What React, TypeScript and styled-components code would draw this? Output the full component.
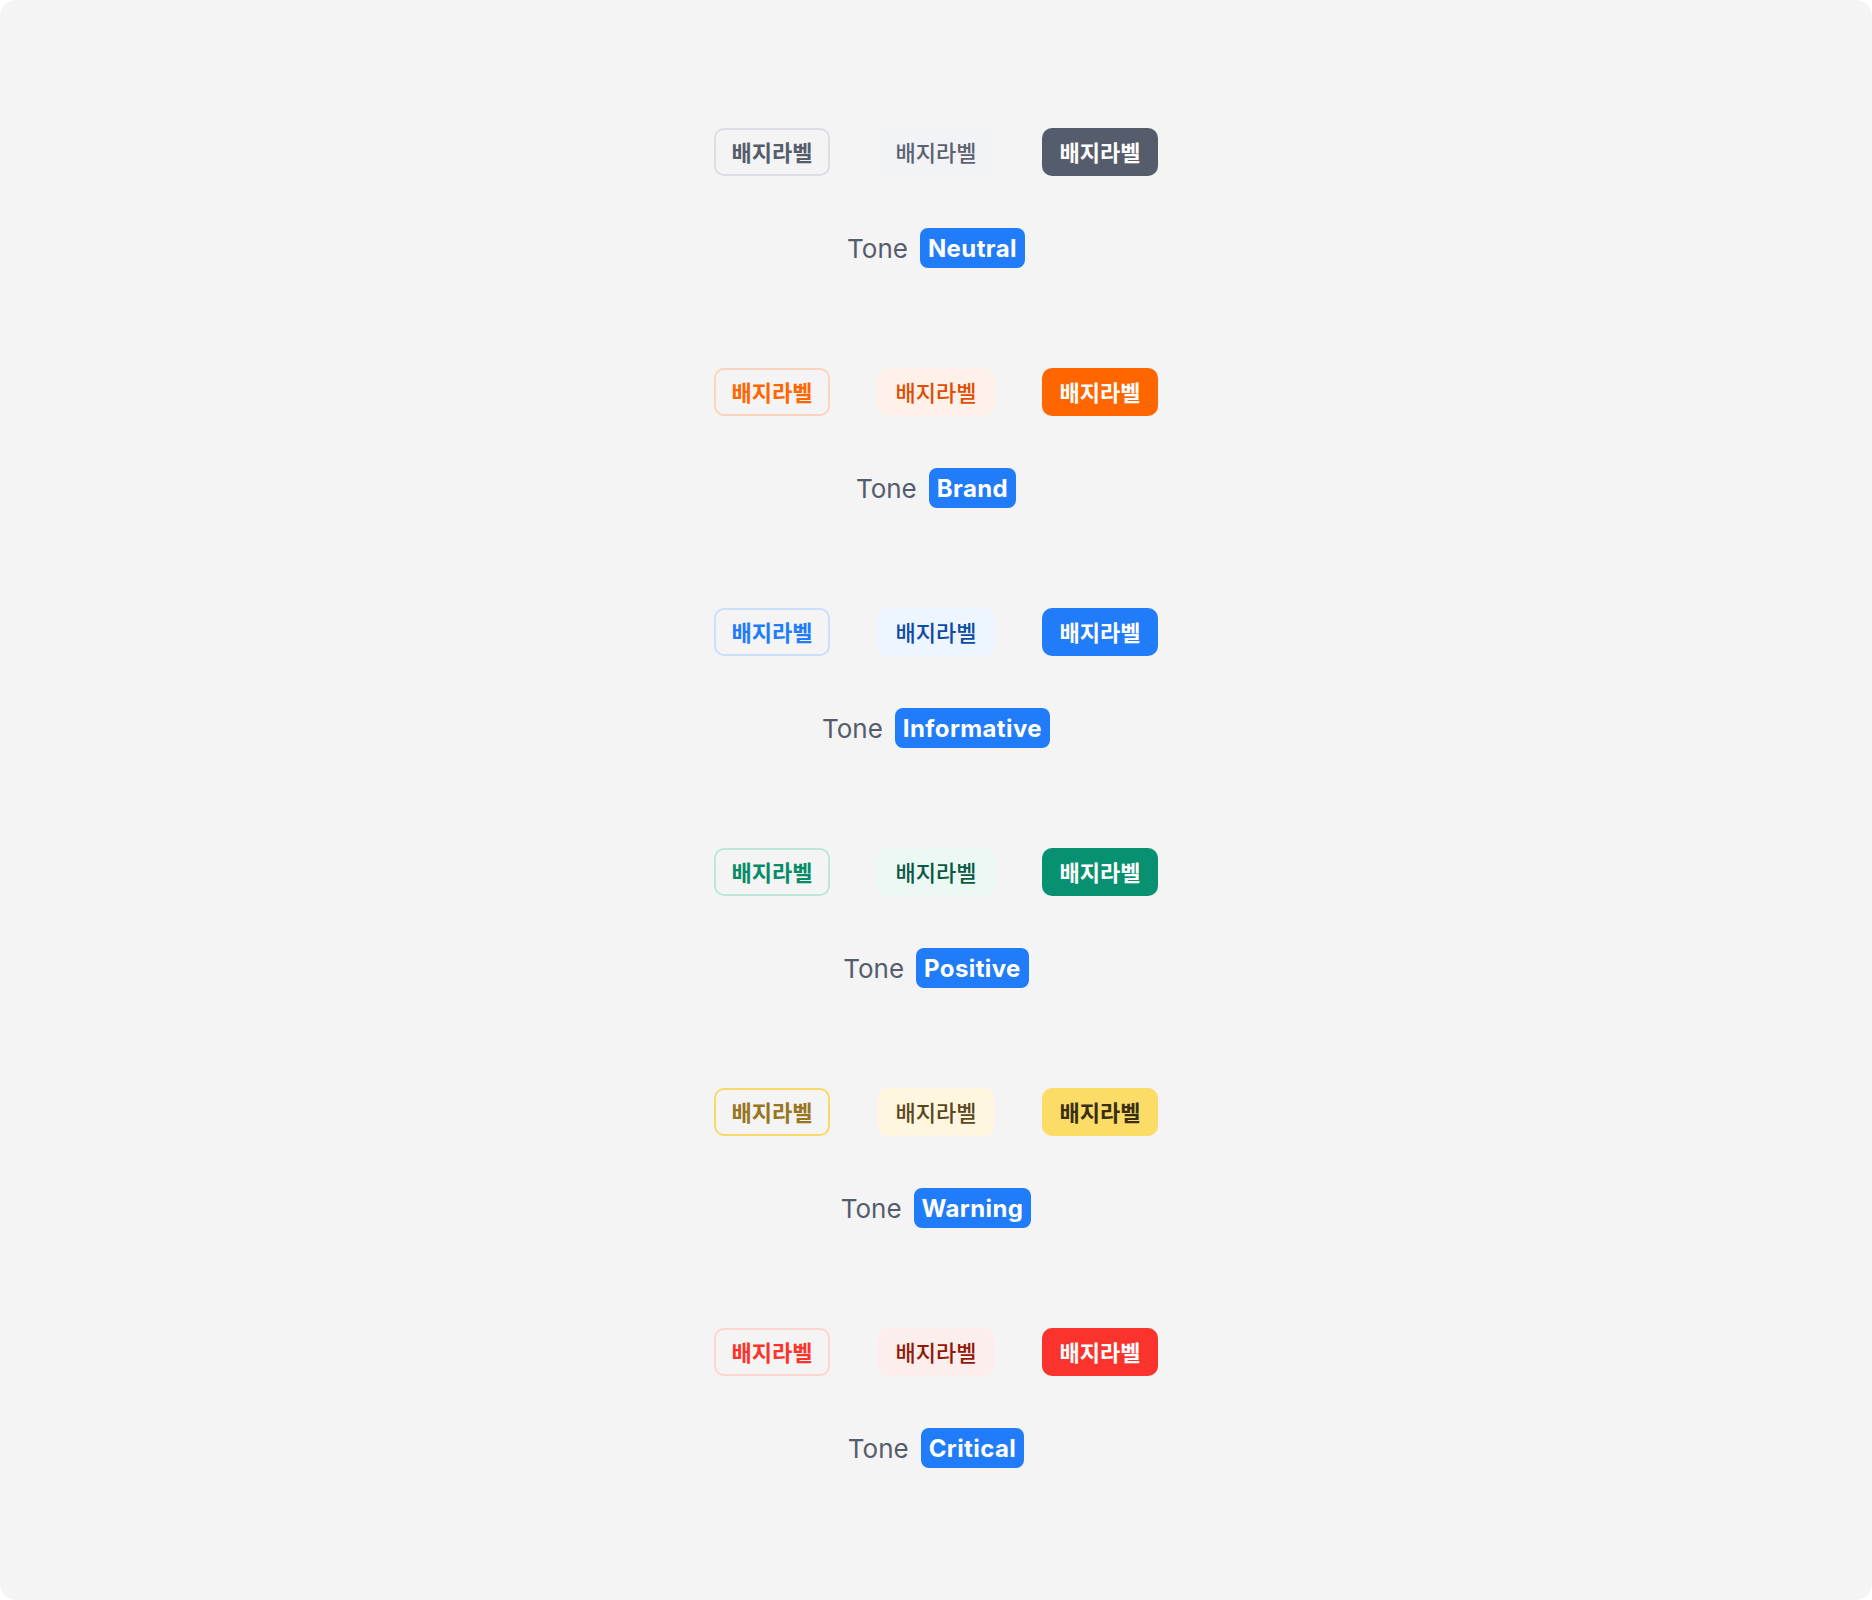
import React, { FC } from 'react';
import styled, { createGlobalStyle } from 'styled-components';

type Tone = 'neutral' | 'brand' | 'informative' | 'positive' | 'warning' | 'critical';
type Variant = 'outline' | 'weak' | 'solid';

interface Palette {
  border: string;
  outlineText: string;
  weakBg: string;
  weakText: string;
  solidBg: string;
  solidText: string;
}

const palettes: Record<Tone, Palette> = {
  neutral: {
    border: '#dcdee3',
    outlineText: '#555d6d',
    weakBg: '#f2f3f6',
    weakText: '#5b6271',
    solidBg: '#555d6d',
    solidText: '#ffffff',
  },
  brand: {
    border: '#ffd3bb',
    outlineText: '#ff6600',
    weakBg: '#fff1ea',
    weakText: '#e14d00',
    solidBg: '#ff6600',
    solidText: '#ffffff',
  },
  informative: {
    border: '#c9dffd',
    outlineText: '#217cf9',
    weakBg: '#edf5ff',
    weakText: '#0f4ba3',
    solidBg: '#217cf9',
    solidText: '#ffffff',
  },
  positive: {
    border: '#bde8d5',
    outlineText: '#078b69',
    weakBg: '#ebf8f3',
    weakText: '#0b5943',
    solidBg: '#079170',
    solidText: '#ffffff',
  },
  warning: {
    border: '#f9d769',
    outlineText: '#977522',
    weakBg: '#fff6df',
    weakText: '#5c4820',
    solidBg: '#fbdc66',
    solidText: '#3a2e12',
  },
  critical: {
    border: '#ffd5d2',
    outlineText: '#fa342c',
    weakBg: '#fdeeee',
    weakText: '#931807',
    solidBg: '#fa342c',
    solidText: '#ffffff',
  },
};

const tones: { tone: Tone; label: string }[] = [
  { tone: 'neutral', label: 'Neutral' },
  { tone: 'brand', label: 'Brand' },
  { tone: 'informative', label: 'Informative' },
  { tone: 'positive', label: 'Positive' },
  { tone: 'warning', label: 'Warning' },
  { tone: 'critical', label: 'Critical' },
];

const variants: Variant[] = ['outline', 'weak', 'solid'];

const GlobalStyle = createGlobalStyle`
  html, body {
    margin: 0;
    padding: 0;
    background: #ffffff;
    overflow: hidden;
  }
  body {
    font-family: Inter, "Noto Sans CJK KR", "Noto Sans", sans-serif;
    -webkit-font-smoothing: antialiased;
  }
`;

const Canvas = styled.main`
  box-sizing: border-box;
  width: 100%;
  height: 100vh;
  padding-top: 128px;
  background: #f4f4f4;
  border-radius: 16px;
  display: flex;
  flex-direction: column;
  align-items: center;
  gap: 100px;
`;

const ToneGroup = styled.section`
  display: flex;
  flex-direction: column;
  align-items: center;
  gap: 52px;
`;

const BadgeRow = styled.div`
  display: flex;
  gap: 48px;
`;

const Badge = styled.span<{ $tone: Tone; $variant: Variant }>`
  box-sizing: border-box;
  display: inline-flex;
  align-items: center;
  justify-content: center;
  width: 116px;
  height: 48px;
  padding-bottom: 3px;
  border-radius: 10px;
  font-family: "Noto Sans CJK KR", Inter, sans-serif;
  font-size: 22px;
  line-height: 1;
  ${({ $tone, $variant }) => {
    const p = palettes[$tone];
    if ($variant === 'outline') {
      return `
        border: 2px solid ${p.border};
        color: ${p.outlineText};
        font-weight: 700;
      `;
    }
    if ($variant === 'weak') {
      return `
        background: ${p.weakBg};
        color: ${p.weakText};
        font-weight: 500;
      `;
    }
    return `
      background: ${p.solidBg};
      color: ${p.solidText};
      font-weight: 700;
    `;
  }}
`;

const ToneRow = styled.div`
  display: flex;
  align-items: center;
  gap: 12px;
  height: 40px;
`;

const ToneLabel = styled.span`
  font-family: Inter, sans-serif;
  font-size: 26px;
  color: #555d6d;
`;

const ToneChip = styled.span`
  display: inline-flex;
  align-items: center;
  height: 40px;
  padding: 0 8px;
  border-radius: 8px;
  background: #217cf9;
  color: #ffffff;
  font-family: Inter, sans-serif;
  font-size: 24px;
  font-weight: 700;
  letter-spacing: 0.4px;
`;

const App: FC = () => {
  return (
    <>
      <GlobalStyle />
      <Canvas>
        {tones.map(({ tone, label }) => (
          <ToneGroup key={tone}>
            <BadgeRow>
              {variants.map((variant) => (
                <Badge key={variant} $tone={tone} $variant={variant}>
                  배지라벨
                </Badge>
              ))}
            </BadgeRow>
            <ToneRow>
              <ToneLabel>Tone</ToneLabel>
              <ToneChip>{label}</ToneChip>
            </ToneRow>
          </ToneGroup>
        ))}
      </Canvas>
    </>
  );
};

export default App;
